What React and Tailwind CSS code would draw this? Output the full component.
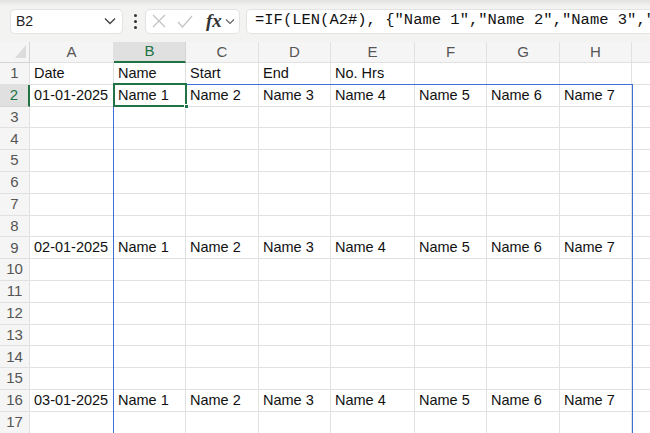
import React from "react";

const COLS = ["A", "B", "C", "D", "E", "F", "G", "H", "I"];
const names = ["Name 1", "Name 2", "Name 3", "Name 4", "Name 5", "Name 6", "Name 7"];

function rowData(r) {
  if (r === 1) return ["Date", "Name", "Start", "End", "No. Hrs", "", "", "", ""];
  if (r === 2) return ["01-01-2025", ...names, ""];
  if (r === 9) return ["02-01-2025", ...names, ""];
  if (r === 16) return ["03-01-2025", ...names, ""];
  return ["", "", "", "", "", "", "", "", ""];
}

export default function App() {
  const rows = Array.from({ length: 17 }, (_, i) => i + 1);
  return (
    <div className="relative w-[650px] h-[433px] overflow-hidden bg-white font-['Liberation_Sans',Arial,sans-serif] text-[#111]">
      {/* Toolbar */}
      <div className="relative h-[42px] bg-[#f3f3f2] flex items-center">
        <div className="absolute top-0 left-0 right-0 h-[6px] bg-gradient-to-b from-[#e2e1df] to-[#f3f3f2]" />
        <div className="relative ml-[10px] w-[113px] h-[25px] bg-white rounded-[5px] border border-[#e3e3e3] flex items-center justify-between pl-[5px] pr-[6px]">
          <span className="text-[14px] text-[#222]">B2</span>
          <svg width="12" height="8" viewBox="0 0 12 8" fill="none">
            <path d="M1 1.5 L6 6.5 L11 1.5" stroke="#444" strokeWidth="1.4" />
          </svg>
        </div>
        <div className="relative ml-[10px] w-[4px] flex flex-col items-center gap-[3px]">
          <div className="w-[3px] h-[3px] rounded-full bg-[#333]" />
          <div className="w-[3px] h-[3px] rounded-full bg-[#333]" />
          <div className="w-[3px] h-[3px] rounded-full bg-[#333]" />
        </div>
        <div className="relative ml-[8px] w-[95px] h-[25px] bg-white rounded-[5px] border border-[#e3e3e3] flex items-center pl-[6px]">
          <svg width="14" height="14" viewBox="0 0 14 14" fill="none">
            <path d="M1 1 L13 13 M13 1 L1 13" stroke="#c4c4c4" strokeWidth="1.3" />
          </svg>
          <svg className="ml-[11px]" width="16" height="13" viewBox="0 0 16 13" fill="none">
            <path d="M1 7 L5.5 12 L15 1" stroke="#c4c4c4" strokeWidth="1.3" />
          </svg>
          <span className="ml-[13px] font-['Liberation_Serif',serif] italic font-bold text-[19px] leading-none text-[#333] -mt-[2px]">fx</span>
          <svg className="ml-[3px]" width="10" height="7" viewBox="0 0 10 7" fill="none">
            <path d="M1 1.5 L5 5.5 L9 1.5" stroke="#666" strokeWidth="1.2" />
          </svg>
        </div>
        <div className="relative ml-[6px] flex-1 min-w-0 h-[25px] bg-white rounded-l-[5px] border border-r-0 border-[#e3e3e3] flex items-center pl-[8px] overflow-hidden whitespace-nowrap">
          <span className="font-['Liberation_Mono',monospace] text-[15.5px] text-[#111]">
            =IF(LEN(A2#), {"{"}"Name 1","Name 2","Name 3","Name 4"
          </span>
        </div>
      </div>

      {/* Grid */}
      <div className="relative w-max grid grid-cols-[30px_84px_72px_73px_72px_84px_72px_73px_72px_84px] grid-rows-[21px_repeat(17,21.8px)]">
        {/* header row */}
        <div className="relative bg-[#f5f5f5] border-r border-b border-[#d4d4d4]">
          <svg className="absolute right-[3px] bottom-[4px]" width="11" height="13" viewBox="0 0 11 13">
            <polygon points="11,0 11,13 0,13" fill="#dcdcdc" />
          </svg>
        </div>
        {COLS.map((c) => (
          <div
            key={c}
            className={
              c === "B"
                ? "flex items-center justify-center bg-[#e0e0e0] border-r border-[#d4d4d4] border-b-2 border-b-[#217346] text-[#217346] text-[15px]"
                : "flex items-center justify-center bg-[#f5f5f5] border-r border-b border-[#e1e1e1] text-[#555] text-[15px]"
            }
          >
            {c}
          </div>
        ))}
        {rows.map((r) => {
          const data = rowData(r);
          return (
            <React.Fragment key={r}>
              <div
                className={
                  r === 2
                    ? "flex items-center justify-center bg-[#e0e0e0] border-b border-[#d4d4d4] border-r-2 border-r-[#217346] text-[#217346] text-[15px]"
                    : "flex items-center justify-center bg-[#f5f5f5] border-r border-b border-[#e1e1e1] text-[#555] text-[15px]"
                }
              >
                {r}
              </div>
              {data.map((v, i) => (
                <div
                  key={i}
                  className="flex items-center pl-[4px] pt-[1px] border-r border-b border-[#e1e1e1] text-[14.5px] whitespace-nowrap overflow-hidden"
                >
                  {v}
                </div>
              ))}
            </React.Fragment>
          );
        })}

        {/* spill range border */}
        <div className="absolute left-[113px] top-[42px] w-[520px] h-[400px] border border-[#3f6fd6] pointer-events-none" />
        {/* active cell */}
        <div className="absolute left-[113px] top-[41px] w-[74px] h-[24px] border-2 border-[#217346] pointer-events-none" />
        <div className="absolute left-[184px] top-[62px] w-[5px] h-[5px] bg-[#217346] border border-white" />
      </div>
    </div>
  );
}
